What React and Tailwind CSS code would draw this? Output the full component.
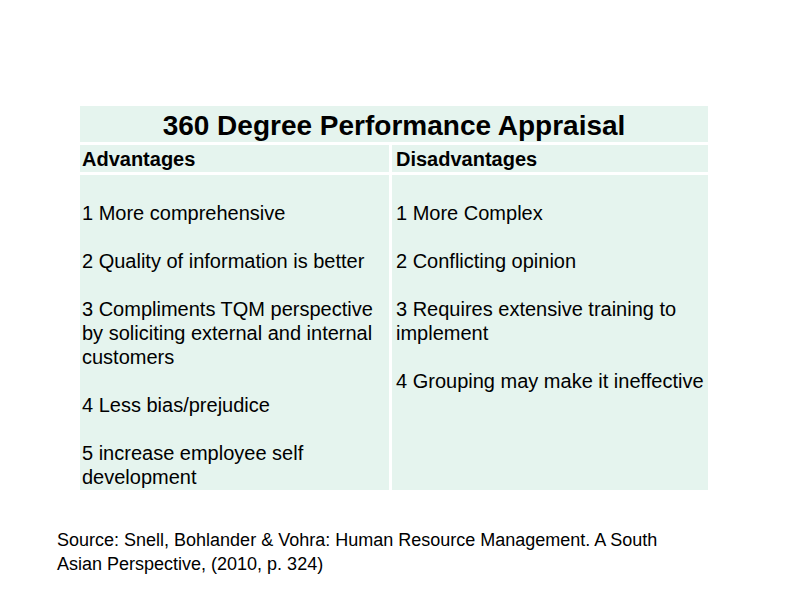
const advantages = [
  ["1 More comprehensive"],
  ["2 Quality of information is better"],
  ["3 Compliments TQM perspective", "by soliciting external and internal", "customers"],
  ["4 Less bias/prejudice"],
  ["5 increase employee self", "development"],
];

const disadvantages = [
  ["1 More Complex"],
  ["2 Conflicting opinion"],
  ["3 Requires extensive training to", "implement"],
  ["4 Grouping may make it ineffective"],
];

const Cell = ({ items, className }) => (
  <div className={`bg-[#e5f4ee] pt-[26px] pb-[12px] flex flex-col gap-[24px] ${className}`}>
    {items.map((lines, i) => (
      <p key={i}>
        {lines.map((l, j) => (
          <span key={j} className="block whitespace-nowrap">
            {l}
          </span>
        ))}
      </p>
    ))}
  </div>
);

const App = () => {
  return (
    <div
      className="w-[794px] h-[595px] bg-white text-black pt-[106px] pl-[80px]"
      style={{ fontFamily: '"Liberation Sans", Arial, sans-serif' }}
    >
      <div className="w-[628px] grid grid-cols-[309px_316px] gap-[3px] text-[20px] leading-[24px]">
        <div className="col-span-2 h-[36px] bg-[#e5f4ee] flex items-center justify-center text-[28px] font-bold pt-[4px]">
          360 Degree Performance Appraisal
        </div>
        <div className="h-[27px] bg-[#e5f4ee] font-bold pl-[2px] flex items-center">
          Advantages
        </div>
        <div className="h-[27px] bg-[#e5f4ee] font-bold pl-[4px] flex items-center">
          Disadvantages
        </div>
        <Cell items={advantages} className="pl-[2px] h-[315px]" />
        <Cell items={disadvantages} className="pl-[4px] h-[315px]" />
      </div>
      <div className="mt-[38px] ml-[-23px] text-[18px] leading-[24px]">
        <p>Source: Snell, Bohlander &amp; Vohra: Human Resource Management. A South</p>
        <p>Asian Perspective, (2010, p. 324)</p>
      </div>
    </div>
  );
};

export default App;
